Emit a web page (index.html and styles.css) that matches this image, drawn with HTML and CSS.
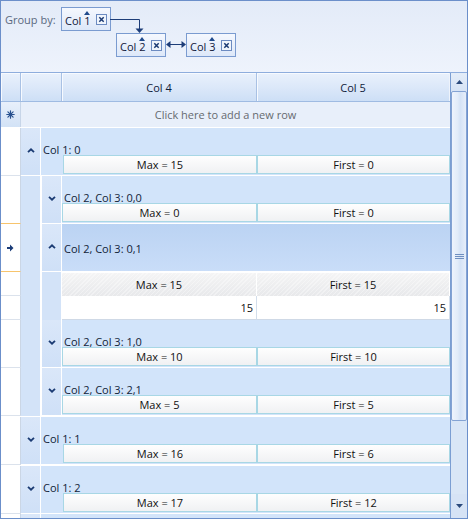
FILE: index.html
```html
<!DOCTYPE html>
<html>
<head>
<meta charset="utf-8">
<link rel="stylesheet" href="styles.css">
</head>
<body>
<div class="grid">
  <div class="gpanel">
    <div class="gp-row first-row">
      <span class="gp-label">Group by:</span>
      <div class="gbox"><span class="gtext">Col <span class="snum">1</span></span><svg class="gclose" width="11" height="11" viewBox="0 0 11 11"><rect x="0.5" y="0.5" width="10" height="10" fill="#f0f5fc" stroke="#6c8bc1"/><path d="M3.3 3.3l4.4 4.4M7.7 3.3l-4.4 4.4" stroke="#1b3a73" stroke-width="1.5"/></svg></div>
    </div>
    <div class="gp-row second-row">
      <div class="gbox"><span class="gtext">Col <span class="snum">2</span></span><svg class="gclose" width="11" height="11" viewBox="0 0 11 11"><rect x="0.5" y="0.5" width="10" height="10" fill="#f0f5fc" stroke="#6c8bc1"/><path d="M3.3 3.3l4.4 4.4M7.7 3.3l-4.4 4.4" stroke="#1b3a73" stroke-width="1.5"/></svg></div>
      <div class="gbox"><span class="gtext">Col <span class="snum">3</span></span><svg class="gclose" width="11" height="11" viewBox="0 0 11 11"><rect x="0.5" y="0.5" width="10" height="10" fill="#f0f5fc" stroke="#6c8bc1"/><path d="M3.3 3.3l4.4 4.4M7.7 3.3l-4.4 4.4" stroke="#1b3a73" stroke-width="1.5"/></svg></div>
    </div>
    <svg class="links" width="466" height="71" viewBox="0 0 466 71">
      <path d="M109 18.5H138.5V28" fill="none" stroke="#1d3d78" stroke-width="1"/>
      <path d="M134.5 27.5H142.5L138.5 32Z" fill="#1d3d78"/>
      <path d="M168 43.5H182" fill="none" stroke="#1d3d78" stroke-width="1"/>
      <path d="M165 43.5L169.5 40V47Z" fill="#1d3d78"/>
      <path d="M185 43.5L180.5 40V47Z" fill="#1d3d78"/>
    </svg>
  </div>

  <div class="gbody">
    <div class="tbl">
      <div class="hrow">
        <div class="hc hind"></div>
        <div class="hc hblank"></div>
        <div class="hc h4">Col 4</div>
        <div class="hc h5">Col 5</div>
      </div>

      <div class="newrow">
        <div class="nind"><svg width="9" height="9" viewBox="0 0 9 9"><path d="M4.5 0.8v7.4M0.8 4.5h7.4M1.9 1.9l5.2 5.2M7.1 1.9l-5.2 5.2" stroke="#27508f" stroke-width="1.2" stroke-linecap="round"/></svg></div>
        <div class="ntext">Click here to add a new row</div>
      </div>

      <!-- Col 1: 0 -->
      <div class="row tl">
        <div class="ind"></div>
        <div class="exp"><svg width="8" height="5" viewBox="0 0 8 5"><path d="M1 4.2L4 1.3 7 4.2" fill="none" stroke="#1b3b73" stroke-width="1.8"/></svg></div>
        <div class="gc">
          <div class="gt">Col 1: 0</div>
          <div class="sum"><div class="sc max">Max = 15</div><div class="sc first">First = 0</div></div>
        </div>
      </div>

      <!-- 0,0 -->
      <div class="row nest">
        <div class="ind cur-edge"></div>
        <div class="indent"></div>
        <div class="exp"><svg width="8" height="5" viewBox="0 0 8 5"><path d="M1 0.8L4 3.7 7 0.8" fill="none" stroke="#1b3b73" stroke-width="1.8"/></svg></div>
        <div class="gc">
          <div class="gt">Col 2, Col 3: 0,0</div>
          <div class="sum"><div class="sc max">Max = 0</div><div class="sc first">First = 0</div></div>
        </div>
      </div>

      <!-- 0,1 current -->
      <div class="row nest">
        <div class="ind cur-edge"><svg width="7" height="8" viewBox="0 0 7 8"><path d="M0 3h3V0.5L6.5 4 3 7.5V5H0z" fill="#1b3c78"/></svg></div>
        <div class="indent"></div>
        <div class="exp"><svg width="8" height="5" viewBox="0 0 8 5"><path d="M1 4.2L4 1.3 7 4.2" fill="none" stroke="#1b3b73" stroke-width="1.8"/></svg></div>
        <div class="gc cur">
          <div class="gt">Col 2, Col 3: 0,1</div>
        </div>
      </div>

      <div class="row r24">
        <div class="ind"></div>
        <div class="indent"></div>
        <div class="indent2"></div>
        <div class="tsc c4">Max = 15</div>
        <div class="tsc c5">First = 15</div>
      </div>

      <div class="row r24">
        <div class="ind"></div>
        <div class="indent"></div>
        <div class="indent2"></div>
        <div class="dc c4">15</div>
        <div class="dc c5">15</div>
      </div>

      <!-- 1,0 -->
      <div class="row nest">
        <div class="ind"></div>
        <div class="indent"></div>
        <div class="exp"><svg width="8" height="5" viewBox="0 0 8 5"><path d="M1 0.8L4 3.7 7 0.8" fill="none" stroke="#1b3b73" stroke-width="1.8"/></svg></div>
        <div class="gc">
          <div class="gt">Col 2, Col 3: 1,0</div>
          <div class="sum"><div class="sc max">Max = 10</div><div class="sc first">First = 10</div></div>
        </div>
      </div>

      <!-- 2,1 -->
      <div class="row nest">
        <div class="ind"></div>
        <div class="indent"></div>
        <div class="exp"><svg width="8" height="5" viewBox="0 0 8 5"><path d="M1 0.8L4 3.7 7 0.8" fill="none" stroke="#1b3b73" stroke-width="1.8"/></svg></div>
        <div class="gc">
          <div class="gt">Col 2, Col 3: 2,1</div>
          <div class="sum"><div class="sc max">Max = 5</div><div class="sc first">First = 5</div></div>
        </div>
      </div>

      <div class="spacer"></div>

      <!-- Col 1: 1 -->
      <div class="row tl">
        <div class="ind"></div>
        <div class="exp"><svg width="8" height="5" viewBox="0 0 8 5"><path d="M1 0.8L4 3.7 7 0.8" fill="none" stroke="#1b3b73" stroke-width="1.8"/></svg></div>
        <div class="gc">
          <div class="gt">Col 1: 1</div>
          <div class="sum"><div class="sc max">Max = 16</div><div class="sc first">First = 6</div></div>
        </div>
      </div>

      <div class="spacer"></div>

      <!-- Col 1: 2 -->
      <div class="row tl">
        <div class="ind"></div>
        <div class="exp"><svg width="8" height="5" viewBox="0 0 8 5"><path d="M1 0.8L4 3.7 7 0.8" fill="none" stroke="#1b3b73" stroke-width="1.8"/></svg></div>
        <div class="gc">
          <div class="gt">Col 1: 2</div>
          <div class="sum"><div class="sc max">Max = 17</div><div class="sc first">First = 12</div></div>
        </div>
      </div>

      <!-- next group row, only its top edge is visible -->
      <div class="row tl">
        <div class="ind"></div>
        <div class="exp"></div>
        <div class="gc"></div>
      </div>
    </div>

    <div class="vscroll">
      <div class="sb-btn up"><svg width="7" height="4" viewBox="0 0 7 4"><path d="M0 4L3.5 0 7 4Z" fill="#2b4a7c"/></svg></div>
      <div class="sb-thumb">
        <svg width="9" height="5" viewBox="0 0 9 5"><path d="M0 0.5h9M0 2.5h9M0 4.5h9" stroke="#6f8fc0" stroke-width="1"/></svg>
      </div>
      <div class="sb-track"></div>
      <div class="sb-btn down"><svg width="7" height="4" viewBox="0 0 7 4"><path d="M0 0L3.5 4 7 0Z" fill="#2b4a7c"/></svg></div>
    </div>
  </div>
</div>
</body>
</html>
```

FILE: styles.css
```css
* { box-sizing: border-box; }

body {
  margin: 0;
  font-family: "Open Sans", "Noto Sans", sans-serif;
  font-size: 11px;
  color: #1a2a40;
  background: #fff;
}

.grid {
  width: 468px;
  height: 519px;
  border: 1px solid #6b8fca;
  overflow: hidden;
  background: #fff;
  display: flex;
  flex-direction: column;
}

/* ---------- group panel ---------- */
.gpanel {
  position: relative;
  height: 72px;
  flex: none;
  border-bottom: 1px solid #8eaddd;
  background: linear-gradient(#e3ebf8, #eef3fc);
}

.gp-row {
  display: flex;
  align-items: center;
}

.first-row {
  margin-top: 6px;
  padding-left: 4px;
}

.gp-label {
  width: 56px;
  color: #5a697f;
}

.second-row {
  margin-top: 2px;
  padding-left: 115px;
  gap: 20px;
}

.gbox {
  width: 50px;
  height: 24px;
  border: 1px solid #7a9bd0;
  background: linear-gradient(#f5f8fe, #dde8f9);
  display: flex;
  align-items: center;
  justify-content: space-between;
  padding: 2px 3px 0 3px;
  color: #10183a;
}

.gtext {
  line-height: 15px;
}

.snum {
  position: relative;
}

.snum::before {
  content: "";
  position: absolute;
  left: 50%;
  top: -2px;
  margin-left: -3.5px;
  border-left: 3.5px solid transparent;
  border-right: 3.5px solid transparent;
  border-bottom: 4px solid #1f4a8c;
}

.gclose {
  display: block;
  margin-top: -1px;
}

.links {
  position: absolute;
  left: 0;
  top: 0;
}

/* ---------- grid body ---------- */
.gbody {
  flex: 1;
  min-height: 0;
  display: flex;
}

.tbl {
  width: 449px;
  flex: none;
  overflow: hidden;
  display: flex;
  flex-direction: column;
}

.hrow {
  display: flex;
  height: 29px;
  flex: none;
  border-bottom: 1px solid #9fbbe2;
}

.hc {
  border-right: 1px solid #a9c1e4;
  background: linear-gradient(#e9f1fc, #dce8f9 50%, #cddff6);
  box-shadow: inset 1px 1px 0 #f7faff;
  display: flex;
  align-items: center;
  justify-content: center;
  color: #10213a;
}

.hind { width: 20px; }
.hblank { width: 41px; }
.h4 { width: 195px; }
.h5 { width: 193px; border-right-color: #eef3fb; }

.newrow {
  display: flex;
  height: 26px;
  flex: none;
  border-bottom: 1px solid #fff;
}

.nind {
  width: 20px;
  border-right: 1px solid #c7d5e8;
  background: linear-gradient(#e8f0fb, #d2e2f6);
  display: flex;
  align-items: center;
  justify-content: center;
}

.ntext {
  flex: 1;
  background: #e8effa;
  display: flex;
  align-items: center;
  justify-content: center;
  padding-right: 20px;
  color: #666a70;
}

/* rows */
.row {
  display: flex;
  height: 48px;
  flex: none;
}

.row.r24 { height: 24px; }

.ind {
  width: 20px;
  flex: none;
  background: #fff;
  border-right: 1px solid #cbd6e5;
  border-bottom: 1px solid #dbe2ec;
  display: flex;
  align-items: center;
  justify-content: center;
}

.ind.cur-edge { border-bottom-color: #f7c46c; }

.indent {
  width: 21px;
  flex: none;
  background: #d3e3f8;
  border-right: 2px solid #fff;
}

.indent2 {
  width: 20px;
  flex: none;
  background: #d3e3f8;
  border-right: 1px solid #fff;
}

.exp {
  width: 20px;
  flex: none;
  background: linear-gradient(#dae7f9, #cfe0f7);
  border-right: 1px solid #fff;
  border-bottom: 1px solid #fff;
  display: flex;
  align-items: center;
  justify-content: center;
  padding-bottom: 3px;
}

.gc {
  flex: 1;
  min-width: 0;
  background: #d2e4fa;
  border-bottom: 1px solid #fff;
  display: flex;
  flex-direction: column;
  justify-content: flex-end;
  padding-bottom: 1px;
}

.gc.cur {
  justify-content: center;
  padding-bottom: 0;
  background: linear-gradient(#bbd3f3, #c9ddf8);
}

.gt {
  padding-left: 2px;
  line-height: 13px;
  margin-bottom: -1px;
  color: #111e38;
  white-space: nowrap;
}

.gc.cur .gt { padding-top: 2px; margin-bottom: 0; }

.sum {
  display: flex;
  height: 19px;
  flex: none;
}

.tl .sum { padding-left: 22px; }

.sc {
  border: 1px solid #a8d7e5;
  background: linear-gradient(#fefefe, #f0f1f3);
  display: flex;
  align-items: center;
  justify-content: center;
  color: #111;
}

.tl .sc.max { width: 194px; }
.nest .sc.max { width: 195px; }
.sc.first { width: 193px; }

.c4 { width: 195px; flex: none; }
.c5 { width: 193px; flex: none; }

.tsc {
  border-top: 1px solid #fff;
  border-right: 1px solid #fff;
  background:
    repeating-linear-gradient(135deg, rgba(255,255,255,0.35) 0 1px, rgba(255,255,255,0) 1px 3px),
    linear-gradient(#f4f4f5, #e8e9eb);
  display: flex;
  align-items: center;
  justify-content: center;
  color: #111;
}

.dc {
  background: #fff;
  border-right: 1px solid #d3deeb;
  border-bottom: 1px solid #cfd9e6;
  display: flex;
  align-items: center;
  justify-content: flex-end;
  padding-right: 3px;
  color: #111;
}

.spacer {
  height: 1px;
  flex: none;
  background: #fff;
}

/* ---------- scrollbar ---------- */
.vscroll {
  width: 17px;
  flex: none;
  border-left: 1px solid #7b9ed2;
  background: #d9e6f6;
  display: flex;
  flex-direction: column;
}

.sb-btn {
  height: 18px;
  flex: none;
  display: flex;
  align-items: center;
  justify-content: center;
  background: linear-gradient(#e4edf9, #d6e3f5);
}

.sb-btn.down {
  height: 24px;
  background: #d6e3f5;
}

.sb-thumb {
  height: 330px;
  flex: none;
  border: 1px solid #84a3d3;
  border-radius: 2px;
  background: linear-gradient(90deg, #eef4fd, #e2ecf9 40%, #d5e3f6 60%, #e6eefa);
  display: flex;
  align-items: center;
  justify-content: center;
}

.sb-track { flex: 1; }
```
